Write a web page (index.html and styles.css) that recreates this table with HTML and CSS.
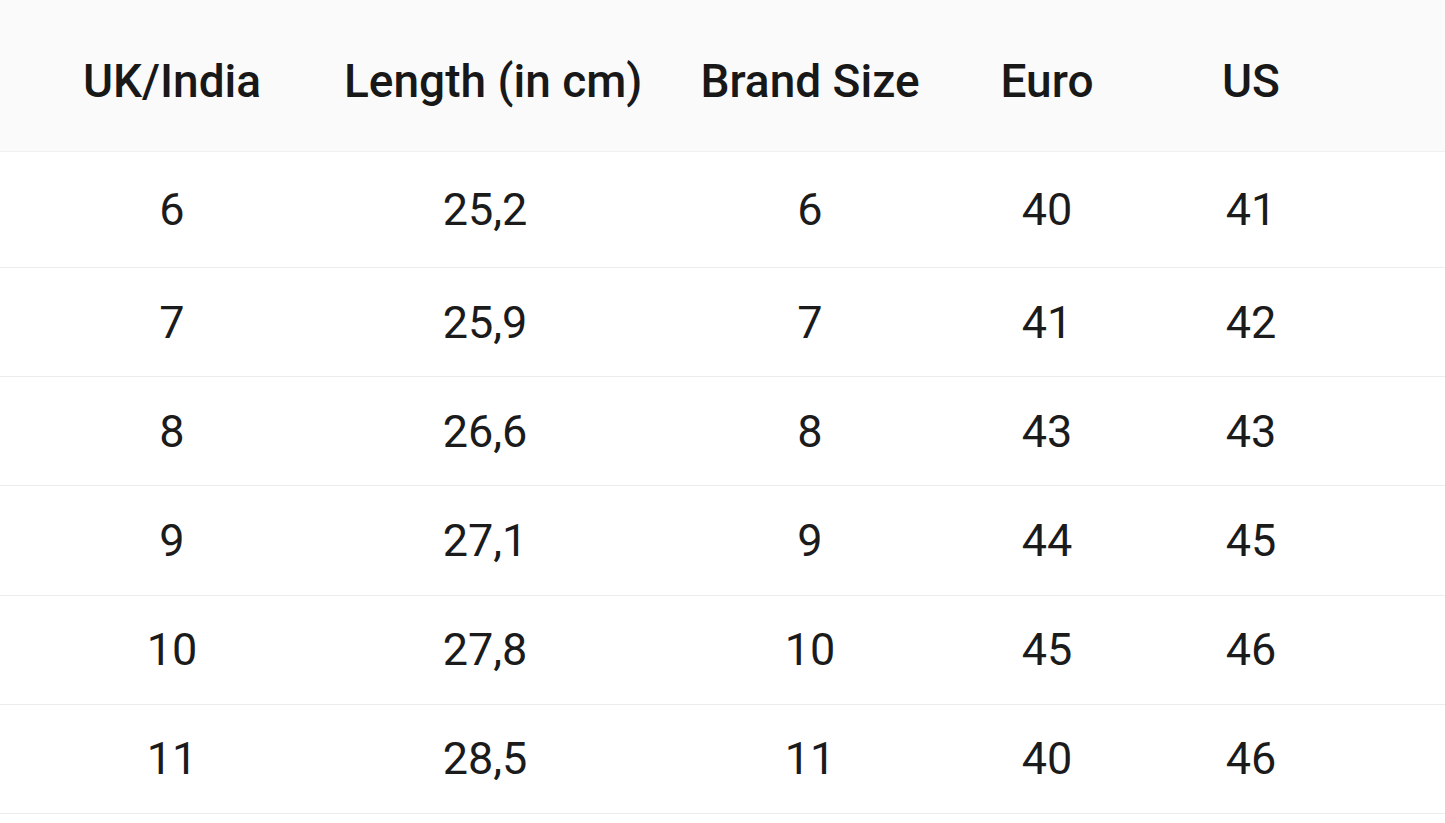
FILE: index.html
```html
<!DOCTYPE html>
<html>
<head>
<meta charset="utf-8">
<link rel="stylesheet" href="styles.css">
</head>
<body>
<div class="table">
  <div class="row head">
    <div class="cell">UK/India</div>
    <div class="cell">Length (in cm)</div>
    <div class="cell">Brand Size</div>
    <div class="cell">Euro</div>
    <div class="cell">US</div>
  </div>
  <div class="row first">
    <div class="cell">6</div><div class="cell">25,2</div><div class="cell">6</div><div class="cell">40</div><div class="cell">41</div>
  </div>
  <div class="row">
    <div class="cell">7</div><div class="cell">25,9</div><div class="cell">7</div><div class="cell">41</div><div class="cell">42</div>
  </div>
  <div class="row">
    <div class="cell">8</div><div class="cell">26,6</div><div class="cell">8</div><div class="cell">43</div><div class="cell">43</div>
  </div>
  <div class="row">
    <div class="cell">9</div><div class="cell">27,1</div><div class="cell">9</div><div class="cell">44</div><div class="cell">45</div>
  </div>
  <div class="row">
    <div class="cell">10</div><div class="cell">27,8</div><div class="cell">10</div><div class="cell">45</div><div class="cell">46</div>
  </div>
  <div class="row">
    <div class="cell">11</div><div class="cell">28,5</div><div class="cell">11</div><div class="cell">40</div><div class="cell">46</div>
  </div>
</div>
</body>
</html>
```

FILE: styles.css
```css
html, body {
  margin: 0;
  padding: 0;
  background: #ffffff;
}
body {
  font-family: Roboto, "Liberation Sans", sans-serif;
  color: #1b1b1b;
}
.table {
  display: flex;
  flex-direction: column;
  width: 1445px;
}
.row {
  display: grid;
  grid-template-columns: 344px 282px 368px 106px 302px 43px;
  height: 108.2px;
  border-bottom: 1px solid #ececec;
  align-items: center;
  font-size: 45px;
  font-weight: 400;
}
.row.first {
  height: 115px;
}
.row.head {
  height: 141px;
  padding-top: 10px;
  background: #fafafa;
  border-bottom: 1px solid #f1f1f1;
  font-weight: 500;
  font-size: 46px;
  color: #181818;
}
.cell {
  text-align: center;
  white-space: nowrap;
}
```
